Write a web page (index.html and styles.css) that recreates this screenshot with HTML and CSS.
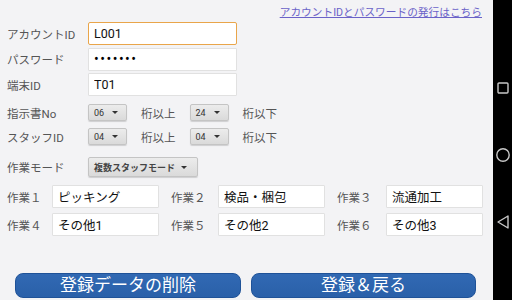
FILE: index.html
```html
<!DOCTYPE html>
<html lang="ja">
<head>
  <meta charset="UTF-8">
  <title>ログイン設定</title>
  <link rel="stylesheet" href="styles.css">
</head>
<body>
  <div class="screen">
    <main class="app">

      <!-- 発行リンク -->
      <div class="top-link"><a href="#">アカウントIDとパスワードの発行はこちら</a></div>

      <!-- ログイン情報 -->
      <div class="login">
        <div class="field">
          <label>アカウントID</label>
          <input class="text-input focused" type="text" value="L001">
        </div>
        <div class="field">
          <label>パスワード</label>
          <input class="text-input pass" type="password" value="1234567">
        </div>
        <div class="field">
          <label>端末ID</label>
          <input class="text-input" type="text" value="T01">
        </div>
      </div>

      <!-- 桁数・モード -->
      <div class="settings">
        <div class="set-row">
          <span class="row-label">指示書No</span>
          <span class="spinner">06</span>
          <span class="unit">桁以上</span>
          <span class="spinner">24</span>
          <span class="unit">桁以下</span>
        </div>
        <div class="set-row">
          <span class="row-label">スタッフID</span>
          <span class="spinner">04</span>
          <span class="unit">桁以上</span>
          <span class="spinner">04</span>
          <span class="unit">桁以下</span>
        </div>
        <div class="set-row mode-row">
          <span class="row-label">作業モード</span>
          <span class="spinner wide">複数スタッフモード</span>
        </div>
      </div>

      <!-- 作業名 -->
      <div class="work-grid">
        <span class="wlabel">作業１</span>
        <input class="text-input" type="text" value="ピッキング">
        <span class="wlabel indent">作業２</span>
        <input class="text-input" type="text" value="検品・梱包">
        <span class="wlabel indent">作業３</span>
        <input class="text-input" type="text" value="流通加工">
        <span class="wlabel">作業４</span>
        <input class="text-input" type="text" value="その他1">
        <span class="wlabel indent">作業５</span>
        <input class="text-input" type="text" value="その他2">
        <span class="wlabel indent">作業６</span>
        <input class="text-input" type="text" value="その他3">
      </div>

      <div class="actions">
        <button class="action-btn">登録データの削除</button>
        <button class="action-btn">登録＆戻る</button>
      </div>
    </main>

    <!-- Android ナビゲーションバー -->
    <nav class="sysbar">
      <svg width="14" height="14" viewBox="0 0 14 14"><rect x="2" y="2" width="10" height="10" rx="1" fill="none" stroke="#c8c8c8" stroke-width="1.4"/></svg>
      <svg width="14" height="14" viewBox="0 0 14 14"><circle cx="7" cy="7" r="6.2" fill="none" stroke="#c8c8c8" stroke-width="1.4"/></svg>
      <svg width="14" height="14" viewBox="0 0 14 14"><path d="M12 1 L2 7 L12 13 Z" fill="none" stroke="#c8c8c8" stroke-width="1.4" stroke-linejoin="round"/></svg>
    </nav>
  </div>
</body>
</html>
```

FILE: styles.css
```css
html, body {
  margin: 0;
  padding: 0;
  height: 100%;
}

body {
  font-family: Roboto, "Noto Sans CJK JP", sans-serif;
  background: #000;
}

.screen {
  display: flex;
  width: 512px;
  height: 300px;
  overflow: hidden;
}

.app {
  flex: 1;
  background: #f3f3f5;
  padding: 0 10px 0 7px;
}

.sysbar {
  width: 21px;
  background: #000;
  display: flex;
  flex-direction: column;
  align-items: center;
  padding-top: 81px;
  gap: 53px;
}

.sysbar svg {
  display: block;
}

/* link */
.top-link {
  height: 22px;
  text-align: right;
  font-size: 10.7px;
  line-height: 13px;
  padding: 6px 1px 0 0;
  box-sizing: border-box;
}

.top-link a {
  color: #6a62c8;
  text-decoration: underline;
}

/* inputs */
.login {
  display: flex;
  flex-direction: column;
  gap: 2.5px;
}

.field {
  display: flex;
  align-items: center;
}

.field label, .row-label {
  width: 81px;
  flex-shrink: 0;
  font-size: 11.5px;
  color: #555;
}

.text-input {
  box-sizing: border-box;
  height: 23px;
  margin: 0;
  padding: 0 5px;
  border: 1px solid #e1e1e1;
  border-radius: 1px;
  background: #fff;
  font-family: Roboto, "Noto Sans CJK JP", sans-serif;
  font-size: 12.5px;
  color: #111;
  outline: none;
}

.field .text-input {
  width: 149px;
}

.text-input.focused {
  border: 1.5px solid #e9a54a;
  border-radius: 2px;
}

.text-input.pass {
  font-size: 14px;
  letter-spacing: 1.5px;
  color: #000;
}

/* spinners */
.settings {
  margin-top: 8px;
  display: flex;
  flex-direction: column;
  gap: 7px;
}

.set-row {
  display: flex;
  align-items: center;
  gap: 14px;
  height: 17px;
}

.set-row .row-label {
  margin-right: -14px;
}

.mode-row {
  margin-top: 5px;
  height: 20px;
}

.unit {
  font-size: 11.5px;
  color: #555;
}

.spinner {
  box-sizing: border-box;
  width: 39px;
  height: 17px;
  padding-left: 5px;
  display: flex;
  align-items: center;
  font-size: 9px;
  color: #333;
  background: linear-gradient(#ececec, #dadada);
  border: 1px solid #c4c4c4;
  border-radius: 2px;
  box-shadow: 0 1px 1px rgba(0, 0, 0, 0.15);
  position: relative;
}

.spinner::after {
  content: "";
  position: absolute;
  right: 8px;
  top: 6px;
  border-left: 3px solid transparent;
  border-right: 3px solid transparent;
  border-top: 3.5px solid #333;
}

.spinner.wide {
  width: 110px;
  height: 20px;
  font-weight: bold;
  color: #444;
}

.spinner.wide::after {
  right: 10px;
  top: 8px;
}

/* work names */
.work-grid {
  margin-top: 8px;
  display: grid;
  grid-template-columns: 45px 107px 59px 107px 61px 97px;
  grid-auto-rows: 23px;
  row-gap: 5px;
  align-items: center;
}

.wlabel {
  font-size: 11.5px;
  color: #555;
}

.wlabel.indent {
  padding-left: 12px;
}

/* buttons */
.actions {
  margin-top: 37px;
  margin-left: 8px;
  display: flex;
  gap: 10px;
}

.action-btn {
  width: 226px;
  height: 25px;
  padding: 0;
  border: 1px solid #1f5298;
  border-radius: 8px;
  background: linear-gradient(#3169b3, #2a60a9);
  color: #fff;
  font-family: Roboto, "Noto Sans CJK JP", sans-serif;
  font-size: 17px;
  line-height: 23px;
}

.action-btn + .action-btn {
  width: 225px;
}
```
